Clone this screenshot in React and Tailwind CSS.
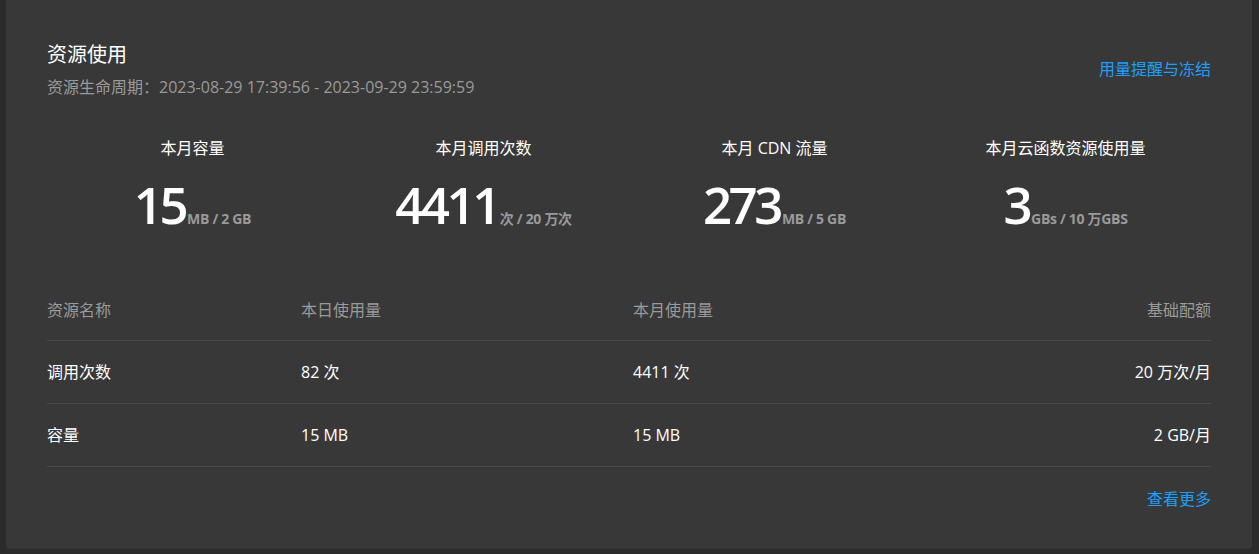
export default function App() {
  const font = { fontFamily: '"Open Sans", "Noto Sans CJK SC", sans-serif' };
  const stats = [
    { label: '本月容量', value: '15', unit: 'MB / 2 GB' },
    { label: '本月调用次数', value: '4411', unit: '次 / 20 万次' },
    { label: '本月 CDN 流量', value: '273', unit: 'MB / 5 GB' },
    { label: '本月云函数资源使用量', value: '3', unit: 'GBs / 10 万GBS' },
  ];
  const rows = [
    ['调用次数', '82 次', '4411 次', '20 万次/月'],
    ['容量', '15 MB', '15 MB', '2 GB/月'],
  ];
  return (
    <div className="w-[1259px] h-[554px] bg-[#2b2b2b] pl-[6px] pr-[7px] pb-[5px] overflow-hidden" style={font}>
      <div className="h-full bg-[#383838] rounded-b-[4px] px-[41px] pt-[41px]">
        <div className="flex items-end justify-between">
          <div>
            <div className="text-[20px] leading-[28px] text-white">资源使用</div>
            <div className="text-[16px] leading-[24px] mt-[6px] text-[#9a9a9a]">资源生命周期：2023-08-29 17:39:56 - 2023-09-29 23:59:59</div>
          </div>
          <div className="text-[16px] leading-[24px] text-[#1e9fff] mb-[18px]">用量提醒与冻结</div>
        </div>
        <div className="grid grid-cols-4 mt-[37px]">
          {stats.map((s) => (
            <div key={s.label} className="flex flex-col items-center">
              <div className="text-[16px] leading-[24px] text-white">{s.label}</div>
              <div className="flex items-baseline mt-[14px]">
                <span className="text-[51px] leading-[60px] font-semibold text-white tracking-[-3.5px]">{s.value}</span>
                <span className="text-[14px] font-bold text-[#9a9a9a] ml-[2px] tracking-[-0.3px]">{s.unit}</span>
              </div>
            </div>
          ))}
        </div>
        <div className="mt-[64px]">
          <div className="grid grid-cols-[254px_332px_1fr_auto] h-[43px] items-start border-b border-[#4a4a4a] text-[16px] leading-[24px] text-[#9a9a9a]">
            <div>资源名称</div>
            <div>本日使用量</div>
            <div>本月使用量</div>
            <div className="text-right">基础配额</div>
          </div>
          {rows.map((r) => (
            <div key={r[0]} className="grid grid-cols-[254px_332px_1fr_auto] h-[63px] items-center border-b border-[#4a4a4a] text-[16px] leading-[24px] text-white">
              <div>{r[0]}</div>
              <div>{r[1]}</div>
              <div>{r[2]}</div>
              <div className="text-right">{r[3]}</div>
            </div>
          ))}
          <div className="flex justify-end mt-[20px]">
            <span className="text-[16px] leading-[24px] text-[#1e9fff]">查看更多</span>
          </div>
        </div>
      </div>
    </div>
  );
}
